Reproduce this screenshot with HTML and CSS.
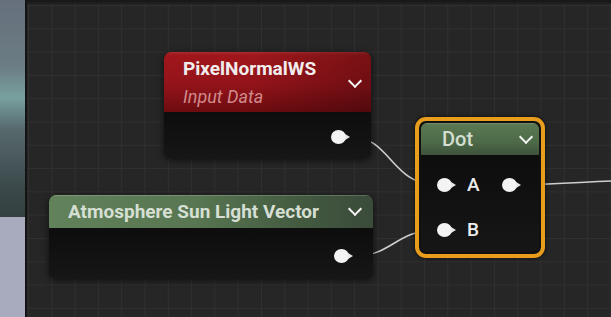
FILE: index.html
```html
<!DOCTYPE html>
<html lang="en">
<head>
    <meta charset="UTF-8">
    <title>Material Graph</title>
    <link rel="stylesheet" href="styles.css">
</head>
<body>

    <div class="editor">
        <div class="viewport">
            <div class="viewport-scene"></div>
            <div class="viewport-panel"></div>
        </div>

        <div class="graph">
            <!-- wires between pins -->
            <svg class="wires" width="585" height="317" viewBox="27 0 585 317">
                <path d="M352 137 C 390 137, 392 185, 437 185" />
                <path d="M355 256 C 392 256, 396 230, 437 230" />
                <path d="M522 185 C 560 184, 585 182, 612 181" />
            </svg>

            <div class="node node-red" style="left: 137px; top: 52px; width: 207px; height: 106px;">
                <div class="node-head">
                    <div class="titles">
                        <div class="title">PixelNormalWS</div>
                        <div class="subtitle">Input Data</div>
                    </div>
                    <span class="chevron"></span>
                </div>
                <div class="node-body">
                    <div class="pin-row out"><span class="pin"></span></div>
                </div>
            </div>

            <div class="node node-green" style="left: 22px; top: 195px; width: 324px; height: 83px;">
                <div class="node-head">
                    <div class="title">Atmosphere Sun Light Vector</div>
                    <span class="chevron"></span>
                </div>
                <div class="node-body">
                    <div class="pin-row out"><span class="pin"></span></div>
                </div>
            </div>

            <div class="selected" style="left: 388px; top: 117px; width: 130px; height: 141px;">
                <div class="node node-dot">
                    <div class="node-head">
                        <div class="title">Dot</div>
                        <span class="chevron"></span>
                    </div>
                    <div class="node-body">
                        <div class="pin-row">
                            <span class="pin"></span><span class="pin-label">A</span>
                            <span class="pin"></span>
                        </div>
                        <div class="pin-row">
                            <span class="pin"></span><span class="pin-label">B</span>
                        </div>
                    </div>
                </div>
            </div>
        </div>
    </div>

</body>
</html>
```

FILE: styles.css
```css
body {
    margin: 0;
    width: 611px;
    height: 317px;
    overflow: hidden;
    font-family: Roboto, "Liberation Sans", sans-serif;
    background-color: #262626;
}
.editor {
    display: flex;
    height: 317px;
}
.viewport {
    width: 25px;
    display: flex;
    flex-direction: column;
    border-right: 2px solid #141414;
}
.viewport-scene {
    height: 217px;
    background: linear-gradient(180deg, #66707c 0%, #6b7c84 30%, #78a09e 45%, #56686c 60%, #3c4a4c 85%, #33403f 100%);
}
.viewport-panel {
    flex: 1;
    background-color: #a7abbd;
}
.graph {
    position: relative;
    flex: 1;
    background-color: #262626;
    background-image:
        linear-gradient(180deg, #161616 0, #1e1e1e 3px, transparent 5px),
        linear-gradient(90deg, #303030 1px, transparent 1px),
        linear-gradient(180deg, #303030 1px, transparent 1px);
    background-size: 100% 100%, 23.3px 23.3px, 23.3px 23.3px;
    background-position: 0 0, 1px 0, 0 5px;
    background-repeat: no-repeat, repeat, repeat;
}
.wires {
    position: absolute;
    left: 0;
    top: 0;
}
.wires path {
    fill: none;
    stroke: #cfcfcf;
    stroke-width: 1.6;
}
.node {
    position: absolute;
    display: flex;
    flex-direction: column;
    border-radius: 7px;
    overflow: hidden;
    background-color: #131313;
    box-shadow: 0 2px 7px rgba(0, 0, 0, 0.65);
}
.node-head {
    display: flex;
    align-items: center;
    justify-content: space-between;
    padding: 0 11px 0 19px;
    box-sizing: border-box;
}
.title {
    font-size: 19px;
    font-weight: bold;
}
.chevron {
    width: 8px;
    height: 8px;
    border-right: 2.5px solid #f4f4f4;
    border-bottom: 2.5px solid #f4f4f4;
    transform: rotate(45deg);
    margin-top: -5px;
}
.node-body {
    flex: 1;
    display: flex;
    flex-direction: column;
    background: linear-gradient(180deg, #0d0d0d, #161616);
}
.node-red .node-head {
    height: 60px;
    align-items: flex-start;
    padding-top: 6px;
    background: linear-gradient(90deg, rgba(0, 0, 0, 0) 40%, rgba(0, 0, 0, 0.25) 100%),
        linear-gradient(180deg, #ae2a2e 0, #a0171b 3px, #93131a 55%, #6c0c10 100%);
}
.node-red .chevron {
    margin-top: 18px;
}
.node-red .title {
    color: #f2eded;
    line-height: 22px;
}
.subtitle {
    font-size: 18px;
    font-style: italic;
    color: #d08a8c;
    line-height: 22px;
    margin-top: 6px;
}
.node-red .node-body .pin-row {
    padding: 18px 20px 0 0;
}
.node-green .node-head {
    height: 33px;
    background: linear-gradient(90deg, #62825b 0%, #577651 45%, #42583f 80%, #3a4b3a 100%);
    box-shadow: inset 0 1px 0 rgba(255, 255, 255, 0.18);
}
.node-green .title {
    color: #d6dfd3;
}
.node-green .chevron {
    margin-right: 2px;
}
.node-green .node-body .pin-row {
    padding: 21px 19px 0 0;
}
.pin-row {
    display: flex;
    align-items: center;
}
.pin-row.out {
    justify-content: flex-end;
}
.pin {
    position: relative;
    width: 15px;
    height: 14px;
    border-radius: 50%;
    background-color: #f3f3f3;
    margin-right: 5px;
}
.pin::after {
    content: "";
    position: absolute;
    left: 14px;
    top: 3.5px;
    border-left: 5px solid #e8e8e8;
    border-top: 3.5px solid transparent;
    border-bottom: 3.5px solid transparent;
}
.selected {
    position: absolute;
    box-sizing: border-box;
    border: 4px solid #e89d1c;
    border-radius: 11px;
    padding: 2px;
    background-color: #111;
    box-shadow: 0 0 4px rgba(0, 0, 0, 0.7);
}
.node-dot {
    position: static;
    height: 100%;
    border-radius: 6px;
    box-shadow: none;
}
.node-dot .node-head {
    height: 32px;
    padding: 0 8px 0 21px;
    background: linear-gradient(180deg, #5a7a53 0%, #4d6a48 60%, #3d533b 100%);
    box-shadow: inset 0 1px 0 rgba(255, 255, 255, 0.15);
}
.node-dot .title {
    color: #d5ded2;
    font-size: 20px;
    font-weight: 500;
}
.node-dot .node-body {
    padding: 20px 0 0 16px;
    gap: 25px;
}
.node-dot .pin-row {
    height: 20px;
}
.pin-label {
    font-size: 19px;
    font-weight: 500;
    line-height: 20px;
    color: #ececec;
    margin: 0 22px 0 10px;
}
```
